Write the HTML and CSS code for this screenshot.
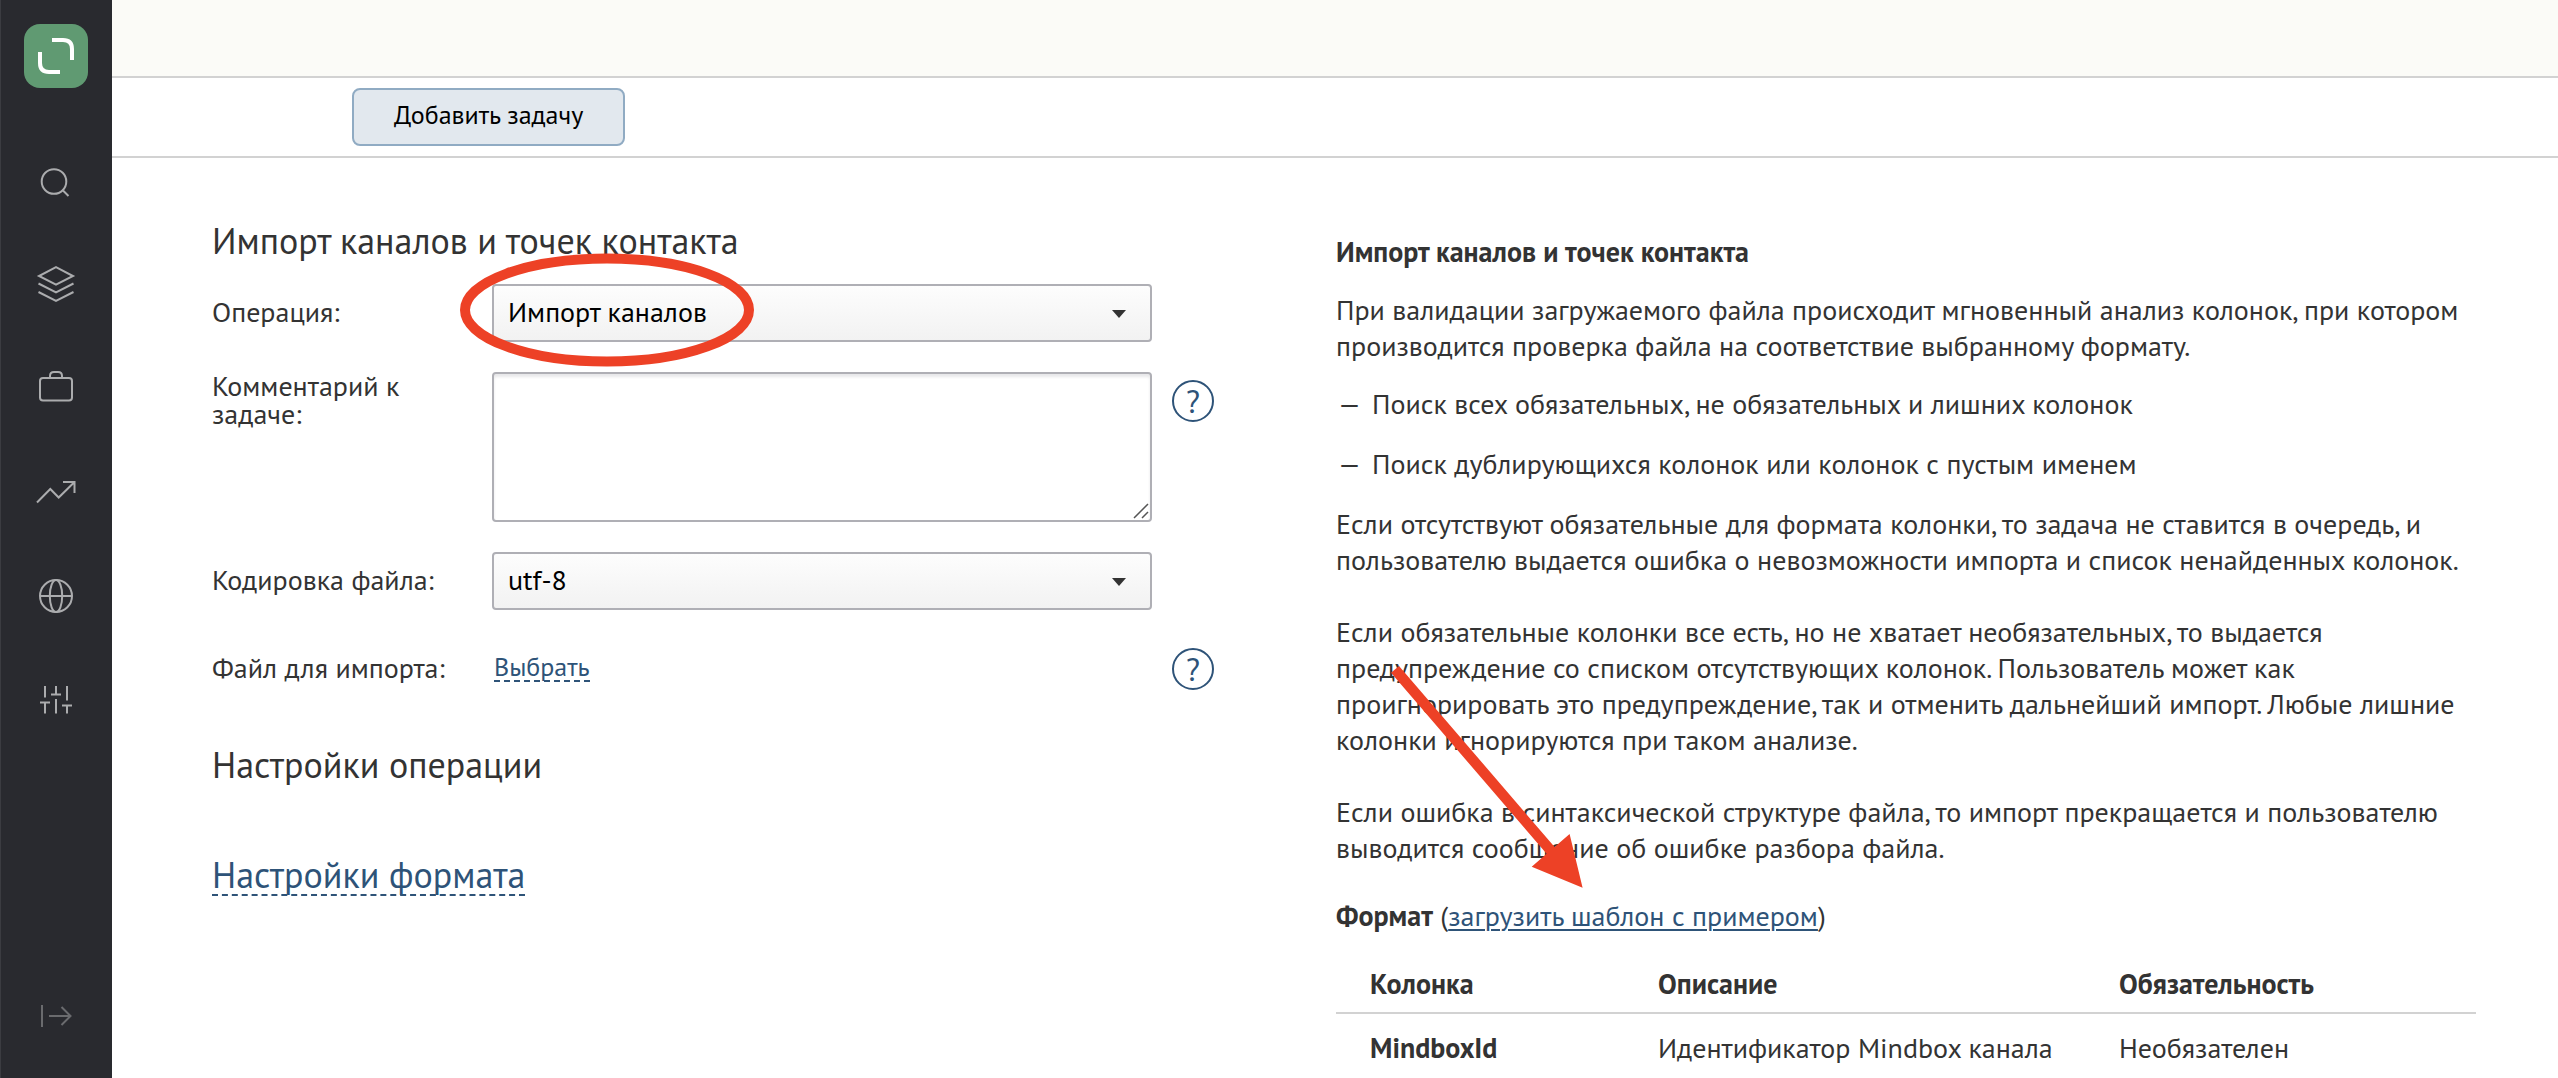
FILE: index.html
```
<!DOCTYPE html>
<html lang="ru">
<head>
  <meta charset="utf-8">
  <meta name="viewport" content="width=device-width, initial-scale=1">
  <title>Импорт каналов и точек контакта</title>
  <link rel="stylesheet" href="styles.css">
</head>
<body>
  <div class="app">
    <aside class="sidebar">
      <a class="logo" href="#" aria-label="Mindbox">
        <svg viewBox="0 0 64 64" width="64" height="64" fill="none" stroke="#fff" stroke-width="4">
          <path d="M28 16h11q9 0 9 9v11M16 28v11q0 9 9 9h11"/>
        </svg>
      </a>
      <nav class="nav" aria-label="Разделы">
        <a class="nav-link" href="#" aria-label="Поиск">
          <svg class="icon" viewBox="0 0 48 48"><circle cx="22" cy="25.500" r="12.300"/><path d="M31 34.500l5.500 5.500"/></svg>
        </a>
        <a class="nav-link" href="#" aria-label="Кампании">
          <svg class="icon" viewBox="0 0 48 48"><path d="M24 7.200l17 8.800-17 8.600L7 16zM6.500 23.500L24 32.500l17.500-9M6.500 32L24 41l17.500-9"/></svg>
        </a>
        <a class="nav-link" href="#" aria-label="Продукты">
          <svg class="icon" viewBox="0 0 48 48"><rect x="8" y="14" width="32" height="22.500" rx="3"/><path d="M18 14v-2q0-4 4-4h4q4 0 4 4v2"/></svg>
        </a>
        <a class="nav-link" href="#" aria-label="Отчёты">
          <svg class="icon" viewBox="0 0 48 48"><path d="M5 34.500L18.300 21l8.400 8.500L42 14.500M31 14h11.500v11"/></svg>
        </a>
        <a class="nav-link" href="#" aria-label="Интеграции">
          <svg class="icon" viewBox="0 0 48 48"><circle cx="24" cy="24" r="16"/><ellipse cx="24" cy="24" rx="6.200" ry="16"/><path d="M8 24h32"/></svg>
        </a>
        <a class="nav-link" href="#" aria-label="Настройки">
          <svg class="icon" viewBox="0 0 48 48"><path d="M13 10v11.500M8 26.500h10M13 26.500v11M24 10v8M19 18.500h10M24 23v14.500M35 10v14.500M30 29.500h10M35 29.500v8"/></svg>
        </a>
      </nav>
      <button class="expand" type="button" aria-label="Развернуть меню">
        <svg class="icon" viewBox="0 0 48 48"><path d="M10 13v22M17 24h21M29.500 15l9 9-9 9"/></svg>
      </button>
    </aside>

    <div class="page">
      <header class="topbar"></header>
      <div class="toolbar">
        <button class="add-task" type="button">Добавить задачу</button>
      </div>

      <main class="content">
        <form class="form">
          <h1 class="heading">Импорт каналов и точек контакта</h1>

          <div class="row">
            <label class="label" for="operation">Операция:</label>
            <div class="field select-field">
              <select class="select" id="operation"><option>Импорт каналов</option></select>
              <svg class="ring" viewBox="0 0 294 114" width="294" height="114" aria-hidden="true">
                <ellipse cx="147" cy="57" rx="142" ry="51.500"/>
              </svg>
            </div>
          </div>

          <div class="row">
            <label class="label label-top" for="comment">Комментарий к задаче:</label>
            <div class="field">
              <textarea class="textarea" id="comment"></textarea>
              <svg class="grip" viewBox="0 0 16 16" width="16" height="16" aria-hidden="true"><path d="M1 15L15 1M9 15l6-6"/></svg>
            </div>
            <button class="hint hint-top" type="button">?</button>
          </div>

          <div class="row">
            <label class="label" for="encoding">Кодировка файла:</label>
            <div class="field select-field">
              <select class="select" id="encoding"><option>utf-8</option></select>
            </div>
          </div>

          <div class="row row-file">
            <span class="label">Файл для импорта:</span>
            <div class="field"><a class="dashed choose" href="#">Выбрать</a></div>
            <button class="hint" type="button">?</button>
          </div>

          <h2 class="heading section">Настройки операции</h2>
          <h2 class="heading section-format"><a class="dashed" href="#">Настройки формата</a></h2>
        </form>

        <section class="help">
          <h2 class="help-title">Импорт каналов и точек контакта</h2>
          <p class="intro">При валидации загружаемого файла происходит мгновенный анализ колонок, при котором производится проверка файла на соответствие выбранному формату.</p>
          <ul class="checks">
            <li>Поиск всех обязательных, не обязательных и лишних колонок</li>
            <li>Поиск дублирующихся колонок или колонок с пустым именем</li>
          </ul>
          <div class="notes">
            <p>Если отсутствуют обязательные для формата колонки, то задача не ставится в очередь, и пользователю выдается ошибка о невозможности импорта и список ненайденных колонок.</p>
            <p>Если обязательные колонки все есть, но не хватает необязательных, то выдается предупреждение со списком отсутствующих колонок. Пользователь может как проигнорировать это предупреждение, так и отменить дальнейший импорт. Любые лишние колонки игнорируются при таком анализе.</p>
            <p>Если ошибка в синтаксической структуре файла, то импорт прекращается и пользователю выводится сообщение об ошибке разбора файла.</p>
          </div>
          <p class="format"><strong>Формат</strong> (<a class="template" href="#">загрузить шаблон с примером</a>)</p>
          <table class="columns">
            <thead>
              <tr><th class="col-name" scope="col">Колонка</th><th class="col-text" scope="col">Описание</th><th scope="col">Обязательность</th></tr>
            </thead>
            <tbody>
              <tr><th scope="row">MindboxId</th><td>Идентификатор Mindbox канала</td><td>Необязателен</td></tr>
            </tbody>
          </table>
          <svg class="arrow" viewBox="0 0 200 224" width="200" height="224" aria-hidden="true">
            <path d="M3 8.700L11 1.900L166.600 183L181.600 170L194.600 223.700L143.700 202.700L158.600 189.800z"/>
          </svg>
        </section>
      </main>
    </div>
  </div>
</body>
</html>
```
FILE: styles.css
```
* { box-sizing: border-box; }

body {
  margin: 0;
  background: #fff;
  color: #333;
  font: 28px/36px "PT Sans", "Noto Sans", sans-serif;
}

h1, h2, p, ul { margin: 0; padding: 0; }
button, select, textarea { font: inherit; }
a { color: #2e5378; text-decoration: none; }

.app { display: flex; min-height: 100vh; }

/* Sidebar */
.sidebar {
  display: flex;
  flex: none;
  flex-direction: column;
  align-items: center;
  width: 112px;
  padding: 24px 0 38px;
  background: #292a2f;
  box-shadow: inset 1px 0 #3b3c41;
}

.logo { height: 64px; border-radius: 16px; background: #609a72; }
.nav { display: flex; flex-direction: column; gap: 56px; margin-top: 68px; }
.nav-link { height: 48px; }
.icon {
  display: block;
  width: 48px;
  height: 48px;
  fill: none;
  stroke: #abacae;
  stroke-width: 2;
}
.expand { margin-top: auto; padding: 0; border: 0; background: none; opacity: 0.5; }

/* Page frame */
.page { flex: 1; min-width: 0; }
.topbar { height: 78px; border-bottom: 2px solid #d2d2d2; background: #fbfbf7; }
.toolbar {
  display: flex;
  padding: 10px 240px;
  border-bottom: 2px solid #d2d2d2;
}
.add-task {
  height: 58px;
  padding: 0 40px 4px;
  border: 2px solid #90abc3;
  border-radius: 8px;
  background: #e2e8ee;
  color: #000;
  font-size: 26px;
}

.content {
  display: grid;
  grid-template-columns: minmax(0, 501fr) minmax(0, 570fr);
  gap: 122px;
  padding: 64px 82px 0 100px;
}

/* Form */
.heading { font-size: 36px; line-height: 38px; font-weight: 400; }
.row {
  display: grid;
  grid-template-columns: 280px minmax(0, 1fr) 42px;
  align-items: center;
  margin-bottom: 30px;
}
.heading + .row { margin-top: 24px; }
.row-file { margin: 38px 0 0; }
.label { padding: 0 20px 2px 0; line-height: 28px; }
.label-top { align-self: start; padding-right: 60px; }
.field { position: relative; margin-right: 20px; }

.select, .textarea {
  display: block;
  width: 100%;
  border: 2px solid #afafb5;
  border-radius: 4px;
  color: #000;
}
.select {
  height: 58px;
  padding: 0 14px 2px;
  appearance: none;
  background: linear-gradient(#fdfdfd, #f2f2f2);
}
.select-field::after {
  content: "";
  position: absolute;
  top: 26px;
  right: 26px;
  border: 7px solid transparent;
  border-top: 8px solid #333;
  border-bottom: 0;
  pointer-events: none;
}
.textarea {
  height: 150px;
  resize: none;
  background: #fff;
  box-shadow: inset 0 3px 3px #e8e8ea;
}
.grip {
  position: absolute;
  right: 3px;
  bottom: 3px;
  fill: none;
  stroke: #555;
  stroke-width: 1.5;
}
.hint {
  width: 42px;
  height: 42px;
  padding: 0;
  border: 2px solid #2e5378;
  border-radius: 50%;
  background: none;
  color: #2e5378;
  font-size: 32px;
  line-height: 36px;
}
.hint-top { align-self: start; margin-top: 8px; }

.dashed { display: block; width: max-content; border-bottom: 2px dashed #2e5378; }
.choose { margin: 0 0 2px 2px; font-size: 26px; line-height: 26px; }
.section { margin-top: 56px; }
.section-format { margin-top: 72px; }

.ring {
  position: absolute;
  top: -31px;
  left: -32px;
  z-index: 1;
  fill: none;
  stroke: #ed4126;
  stroke-width: 10;
  pointer-events: none;
}

/* Help panel */
.help { position: relative; padding-top: 12px; }
.help-title { font-size: 28px; line-height: 36px; }
.intro { margin-top: 22px; }
.checks { display: grid; gap: 24px; margin: 22px 0 24px; list-style: none; }
.checks li { display: flex; }
.checks li::before { content: "—"; width: 34px; padding-left: 2px; }
.notes { display: grid; gap: 36px; }
.format { margin-top: 32px; }
.template { text-decoration: underline; text-underline-offset: 3px; text-decoration-thickness: 2px; }

.columns { width: 100%; margin-top: 22px; border-collapse: collapse; text-align: left; }
.columns th, .columns td { padding: 16px 0 10px; }
.columns thead th { padding-top: 10px; border-bottom: 2px solid #d2d2d2; }
.columns tr > :first-child { padding-left: 34px; }
.col-name { width: 322px; }
.col-text { width: 461px; }

.arrow {
  position: absolute;
  top: 442px;
  left: 52px;
  fill: #ed4126;
  pointer-events: none;
}
```
